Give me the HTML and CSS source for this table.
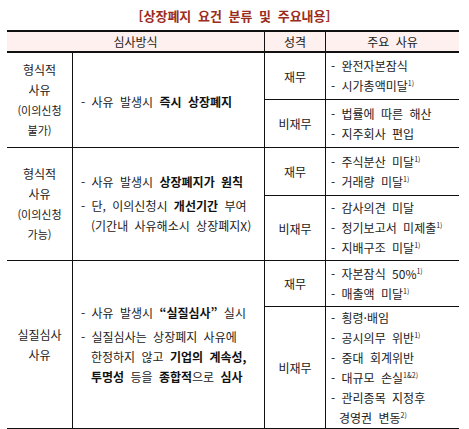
FILE: index.html
```html
<!DOCTYPE html>
<html lang="ko">
<head>
<meta charset="utf-8">
<link rel="stylesheet" href="styles.css">
</head>
<body>
<div class="page">
  <h1 class="title">[상장폐지 요건 분류 및 주요내용]</h1>
  <div class="grid">
    <div class="cell hd span2">심사방식</div>
    <div class="cell hd vl">성격</div>
    <div class="cell hd vl">주요 사유</div>

    <div class="cell kind r1"><span>형식적</span><span>사유</span><small>(이의신청</small><small>불가)</small></div>
    <div class="cell method vl r1">
      <p class="item">- 사유 발생시 <b>즉시 상장폐지</b></p>
    </div>
    <div class="cell nature vl">재무</div>
    <div class="cell reasons vl">
      <p>- 완전자본잠식</p>
      <p>- 시가총액미달<sup>1)</sup></p>
    </div>
    <div class="cell nature vl">비재무</div>
    <div class="cell reasons vl">
      <p>- 법률에 따른 해산</p>
      <p>- 지주회사 편입</p>
    </div>

    <div class="cell kind r2"><span>형식적</span><span>사유</span><small>(이의신청</small><small>가능)</small></div>
    <div class="cell method vl r2">
      <p class="item">- 사유 발생시 <b>상장폐지가 원칙</b></p>
      <p class="item">- 단, 이의신청시 <b>개선기간</b> 부여<br>(기간내 사유해소시 상장폐지X)</p>
    </div>
    <div class="cell nature vl">재무</div>
    <div class="cell reasons vl">
      <p>- 주식분산 미달<sup>1)</sup></p>
      <p>- 거래량 미달<sup>1)</sup></p>
    </div>
    <div class="cell nature vl">비재무</div>
    <div class="cell reasons vl">
      <p>- 감사의견 미달</p>
      <p>- 정기보고서 미제출<sup>1)</sup></p>
      <p>- 지배구조 미달<sup>1)</sup></p>
    </div>

    <div class="cell kind r3"><span>실질심사</span><span>사유</span></div>
    <div class="cell method vl r3">
      <p class="item">- 사유 발생시 <b>“실질심사”</b> 실시</p>
      <p class="item">- 실질심사는 상장폐지 사유에<br>한정하지 않고 <b>기업의 계속성,</b><br><b>투명성</b> 등을 <b>종합적</b>으로 <b>심사</b></p>
    </div>
    <div class="cell nature vl">재무</div>
    <div class="cell reasons vl">
      <p>- 자본잠식 50%<sup>1)</sup></p>
      <p>- 매출액 미달<sup>1)</sup></p>
    </div>
    <div class="cell nature vl">비재무</div>
    <div class="cell reasons vl">
      <p>- 횡령·배임</p>
      <p>- 공시의무 위반<sup>1)</sup></p>
      <p>- 중대 회계위반</p>
      <p>- 대규모 손실<sup>1&amp;2)</sup></p>
      <p>- 관리종목 지정후<br>경영권 변동<sup>2)</sup></p>
    </div>
  </div>
</div>
</body>
</html>
```

FILE: styles.css
```css
* { box-sizing: border-box; }
html, body { margin: 0; padding: 0; background: #fff; }
body {
  font-family: "Noto Sans CJK KR", "Noto Sans", sans-serif;
  font-size: 12px;
  color: #222;
}
.page { padding: 0 10px 0 7px; width: 469px; }
.title {
  margin: 0;
  height: 30px;
  display: flex;
  align-items: center;
  justify-content: center;
  padding-left: 3px;
  font-size: 13px;
  font-weight: 700;
  color: #9b2d20;
  word-spacing: 3px;
}
.grid {
  display: grid;
  grid-template-columns: 65px 192px 61px 134px;
  grid-template-rows: 21px 47px 48px 48px 65px 46px 122px;
  border-top: 2px solid #111;
  width: 452px;
}
.cell {
  border-bottom: 1px solid #111;
  display: flex;
  flex-direction: column;
  justify-content: center;
  word-spacing: 3px;
}
.vl { border-left: 1px solid #111; }
.hd {
  background: #fdf0ef;
  align-items: center;
  border-bottom-width: 2px;
  font-size: 12px;
}
.span2 { grid-column: 1 / 3; }
.kind {
  grid-column: 1;
  align-items: center;
  line-height: 20px;
}
.kind small { font-size: 11px; line-height: 20px; }
.r1 { grid-row: 2 / 4; }
.r2 { grid-row: 4 / 6; }
.r3 { grid-row: 6 / 8; }
.method { grid-column: 2; padding-left: 8px; gap: 4px; }
.method.r1 { padding-top: 3px; }
.item {
  margin: 0;
  line-height: 20px;
  padding-left: 10px;
  text-indent: -10px;
}
.nature { grid-column: 3; align-items: center; }
.reasons { grid-column: 4; padding-left: 5px; }
.reasons p {
  margin: 0;
  line-height: 20px;
  padding-left: 8px;
  text-indent: -8px;
}
b { font-weight: 700; color: #111; }
sup { font-size: 7px; vertical-align: 5px; line-height: 0; word-spacing: 0; }
```
